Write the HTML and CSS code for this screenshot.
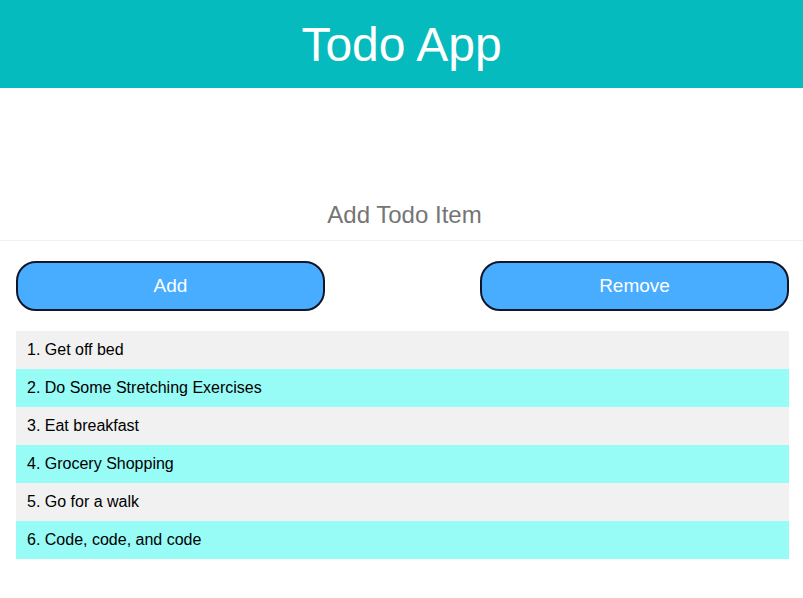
FILE: index.html
```html
<!DOCTYPE html>
<html>
<head>
<meta charset="utf-8">
<title>Todo App</title>
<link rel="stylesheet" href="styles.css">
</head>
<body>
<header class="header"><h1 class="title">Todo App</h1></header>
<div class="input-wrap">
  <input class="todo-input" type="text" placeholder="Add Todo Item">
</div>
<div class="actions">
  <button class="btn">Add</button>
  <button class="btn">Remove</button>
</div>
<ol class="list">
  <li class="item">1. Get off bed</li>
  <li class="item alt">2. Do Some Stretching Exercises</li>
  <li class="item">3. Eat breakfast</li>
  <li class="item alt">4. Grocery Shopping</li>
  <li class="item">5. Go for a walk</li>
  <li class="item alt">6. Code, code, and code</li>
</ol>
</body>
</html>
```
FILE: styles.css
```css
* { box-sizing: border-box; }
html, body { margin: 0; padding: 0; background: #fff; }
body { font-family: "Liberation Sans", Arial, sans-serif; }
.header {
  background: #06bbbe;
  height: 88px;
  display: flex;
  align-items: center;
  justify-content: center;
  padding-top: 2px;
}
.title {
  margin: 0;
  color: #fff;
  font-weight: normal;
  font-size: 48px;
  line-height: 1;
}
.input-wrap { padding-top: 100px; }
.todo-input {
  display: block;
  width: 100%;
  height: 53px;
  border: none;
  border-bottom: 1px solid #efefef;
  text-align: center;
  font-family: "Liberation Sans", Arial, sans-serif;
  font-size: 24px;
  color: #333;
  outline: none;
  padding: 2px 0 0 6px;
}
.todo-input::placeholder { color: #757575; }
.actions {
  display: flex;
  justify-content: space-between;
  padding: 20px 14px 20px 16px;
}
.btn {
  width: 309px;
  height: 50px;
  background: #48acff;
  border: 2px solid #10152a;
  border-radius: 20px;
  color: #fff;
  font-family: "Liberation Sans", Arial, sans-serif;
  font-size: 19px;
  padding: 0;
}
.list {
  list-style: none;
  margin: 0 14px 0 16px;
  padding: 0;
}
.item {
  height: 38px;
  display: flex;
  align-items: center;
  padding-left: 11px;
  background: #f1f1f1;
  color: #000;
  font-size: 16px;
}
.item.alt { background: #97fbf6; }
```
